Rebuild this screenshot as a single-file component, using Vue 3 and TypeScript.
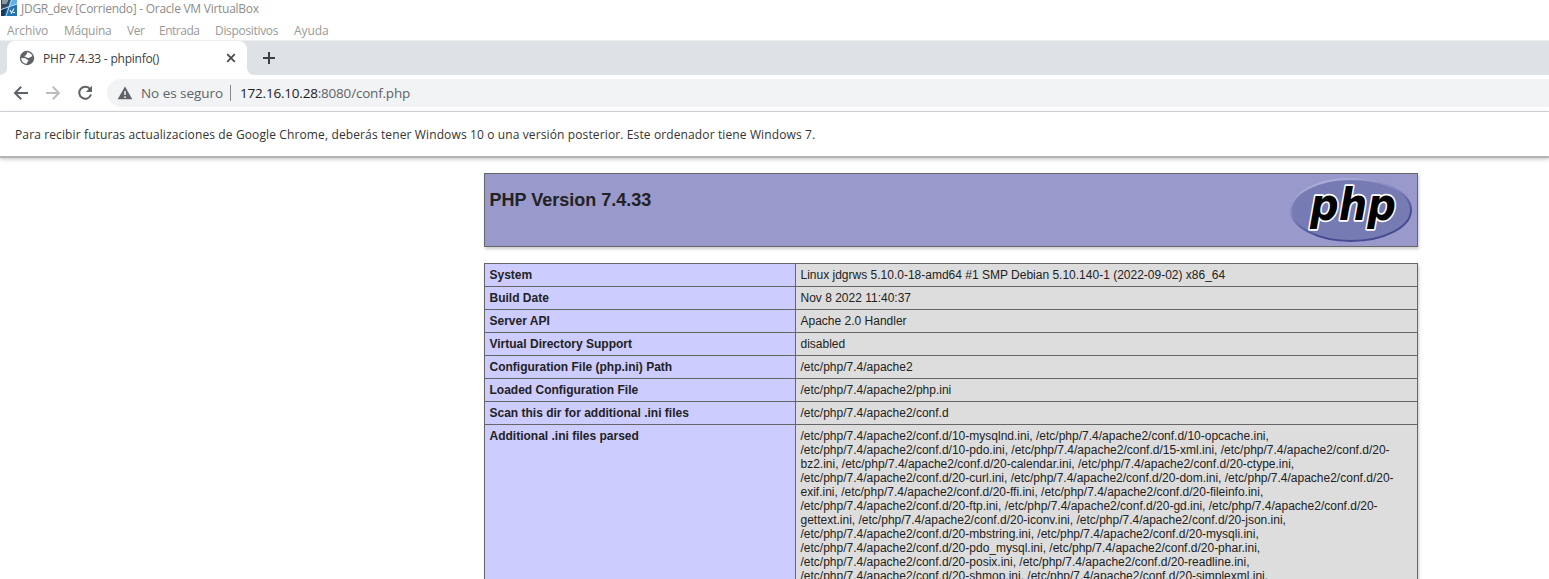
<script setup lang="ts">
interface Row {
  label: string
  value: string
}

const menus: string[] = ['Archivo', 'Máquina', 'Ver', 'Entrada', 'Dispositivos', 'Ayuda']

const rows: Row[] = [
  { label: 'System', value: 'Linux jdgrws 5.10.0-18-amd64 #1 SMP Debian 5.10.140-1 (2022-09-02) x86_64' },
  { label: 'Build Date', value: 'Nov 8 2022 11:40:37' },
  { label: 'Server API', value: 'Apache 2.0 Handler' },
  { label: 'Virtual Directory Support', value: 'disabled' },
  { label: 'Configuration File (php.ini) Path', value: '/etc/php/7.4/apache2' },
  { label: 'Loaded Configuration File', value: '/etc/php/7.4/apache2/php.ini' },
  { label: 'Scan this dir for additional .ini files', value: '/etc/php/7.4/apache2/conf.d' },
]

const dir = '/etc/php/7.4/apache2/conf.d/'
const parsedLines: string[] = [
  `${dir}10-mysqlnd.ini, ${dir}10-opcache.ini,`,
  `${dir}10-pdo.ini, ${dir}15-xml.ini, ${dir}20-`,
  `bz2.ini, ${dir}20-calendar.ini, ${dir}20-ctype.ini,`,
  `${dir}20-curl.ini, ${dir}20-dom.ini, ${dir}20-`,
  `exif.ini, ${dir}20-ffi.ini, ${dir}20-fileinfo.ini,`,
  `${dir}20-ftp.ini, ${dir}20-gd.ini, ${dir}20-`,
  `gettext.ini, ${dir}20-iconv.ini, ${dir}20-json.ini,`,
  `${dir}20-mbstring.ini, ${dir}20-mysqli.ini,`,
  `${dir}20-pdo_mysql.ini, ${dir}20-phar.ini,`,
  `${dir}20-posix.ini, ${dir}20-readline.ini,`,
  `${dir}20-shmop.ini, ${dir}20-simplexml.ini,`,
]
</script>

<template>
  <div class="window">
    <header class="titlebar">
      <svg class="vm-icon" width="16" height="16" viewBox="0 0 16 16">
        <rect width="16" height="16" fill="#1d5f9c" />
        <path d="M0 0h9L6 7 0 9z" fill="#34495a" />
        <path d="M10 0h6v5l-8 2z" fill="#62aee6" />
        <path d="M0 9l6-2-3 9H0z" fill="#163a5c" />
        <path d="M7 8l9-3v11H5z" fill="#2673b4" />
        <path d="M1 1h6M1 3h5" stroke="#dce9f2" stroke-width="1.1" />
        <path d="M10.5 0L5 16M0 9.5L16 4" stroke="#b8dcf5" stroke-width="1" />
        <path d="M9 10l1.6 3L13 8.5M12 12.5h2" fill="none" stroke="#e6f3fc" stroke-width="1.1" />
      </svg>
      <span class="vm-title">JDGR_dev [Corriendo] - Oracle VM VirtualBox</span>
    </header>

    <nav class="menubar">
      <span v-for="(menu, i) in menus" :key="menu" class="menu" :class="`menu-${i}`">{{ menu }}</span>
    </nav>

    <div class="tabstrip">
      <div class="tab">
        <svg class="globe" width="16" height="16" viewBox="0 0 16 16">
          <circle cx="8" cy="8" r="7.2" fill="#5f6368" />
          <path d="M8.2 2.2c2.5.2 4.4 1.6 5.2 3.8-.8.9-1.8.5-2.3 1.3-.7 1.1-2.2.8-3.3.2-.8-.5-1.9-.1-2.2-.9-.3-1 1.4-.9 1.7-1.8.3-.8.9-1.2.9-2.6z" fill="#fff" />
          <path d="M2.2 8.1l4 .1c1.4 0 1.1 1.5 2.3 1.6 1.2.2 1.2 1.2.3 1.8-.8.6-.4 1.5-1.2 2.2-3-.1-5.3-2.5-5.4-5.7z" fill="#fff" />
        </svg>
        <span class="tab-title">PHP 7.4.33 - phpinfo()</span>
        <svg class="close" width="10" height="10" viewBox="0 0 10 10">
          <path d="M1.2 1.2l7.6 7.6M8.8 1.2L1.2 8.8" stroke="#45494d" stroke-width="1.7" />
        </svg>
      </div>
      <div class="strip-rest">
        <svg class="plus" width="14" height="14" viewBox="0 0 14 14">
          <path d="M7 1v12M1 7h12" stroke="#3c4043" stroke-width="2" />
        </svg>
      </div>
    </div>

    <div class="toolbar">
      <svg class="nav-icon" width="16" height="16" viewBox="0 0 16 16">
        <path d="M15 8H2.5M8.2 1.8L2 8l6.2 6.2" fill="none" stroke="#5f6368" stroke-width="2" />
      </svg>
      <svg class="nav-icon" width="16" height="16" viewBox="0 0 16 16">
        <path d="M1 8h12.5M7.8 1.8L14 8l-6.2 6.2" fill="none" stroke="#babcbe" stroke-width="2" />
      </svg>
      <svg class="nav-icon" width="16" height="16" viewBox="0 0 16 16">
        <path d="M13.1 4.2A6 6 0 1 0 14 9.5" fill="none" stroke="#5f6368" stroke-width="2" />
        <path d="M15 .8V7H8.8z" fill="#5f6368" />
      </svg>
      <div class="omnibox">
        <svg class="warn" width="16" height="14" viewBox="0 0 16 14">
          <path d="M8 0.5L15.3 13.2H.7z" fill="#5f6368" />
          <path d="M8 5v4M8 10.2v1.7" stroke="#f1f3f4" stroke-width="1.5" />
        </svg>
        <span class="insecure">No es seguro</span>
        <span class="divider"></span>
        <span class="url"><span class="host">172.16.10.28</span><span class="path">:8080/conf.php</span></span>
      </div>
    </div>

    <div class="infobar">
      <span class="notice">Para recibir futuras actualizaciones de Google Chrome, deberás tener Windows 10 o una versión posterior. Este ordenador tiene Windows 7.</span>
    </div>

    <main class="page">
      <section class="banner">
        <h1>PHP Version 7.4.33</h1>
        <svg class="logo" width="122" height="66" viewBox="0 0 122 66">
          <defs>
            <linearGradient id="rim" x1="0.2" y1="0" x2="0.7" y2="1">
              <stop offset="0" stop-color="#b5b7de" />
              <stop offset="0.42" stop-color="#7c7fb9" />
              <stop offset="0.75" stop-color="#494b92" />
              <stop offset="1" stop-color="#484a91" />
            </linearGradient>
          </defs>
          <ellipse cx="61" cy="33" rx="60" ry="31" fill="#777bb3" stroke="url(#rim)" stroke-width="2" />
          <text class="logo-text" x="20" y="43" textLength="86" lengthAdjust="spacingAndGlyphs">php</text>
        </svg>
      </section>

      <table class="info">
        <tbody>
          <tr v-for="row in rows" :key="row.label">
            <th>{{ row.label }}</th>
            <td>{{ row.value }}</td>
          </tr>
          <tr>
            <th>Additional .ini files parsed</th>
            <td>
              <div v-for="line in parsedLines" :key="line" class="line">{{ line }}</div>
            </td>
          </tr>
        </tbody>
      </table>
    </main>
  </div>
</template>

<style>
html,
body {
  margin: 0;
  overflow: hidden;
  background: #fff;
}
</style>

<style scoped>
.window {
  width: 1549px;
  height: 579px;
  overflow: hidden;
  display: flex;
  flex-direction: column;
  background: #fff;
  font-family: 'Open Sans', 'Noto Sans', sans-serif;
  white-space: nowrap;
}
.window > * {
  flex-shrink: 0;
}
.titlebar {
  height: 20px;
  display: flex;
  align-items: flex-start;
  font-size: 12px;
  line-height: 18px;
  color: #8c8c8c;
}
.vm-icon {
  margin-left: 1px;
  margin-right: 4px;
}
.vm-title {
  letter-spacing: -0.26px;
}
.menubar {
  height: 20px;
  padding-left: 7px;
  display: flex;
  font-size: 12px;
  line-height: 21px;
  color: #999;
}
.menu {
  letter-spacing: -0.1px;
}
.menu-0 {
  width: 57px;
}
.menu-1 {
  width: 63px;
  letter-spacing: -0.25px;
}
.menu-2 {
  width: 32px;
  letter-spacing: -0.5px;
}
.menu-3 {
  width: 56px;
  letter-spacing: -0.5px;
}
.menu-4 {
  width: 79px;
  letter-spacing: -0.32px;
}
.tabstrip {
  height: 34px;
  background: #fff;
  display: flex;
  border-top: 1px solid #eceef0;
}
.tabstrip::before {
  content: '';
  width: 7px;
  background: #dee1e6;
  border-radius: 0 0 7px 0;
}
.tab {
  box-sizing: border-box;
  width: 240px;
  height: 34px;
  border-radius: 8px 8px 0 0;
  background: #fff;
  box-shadow: 0 -9px 0 #dee1e6;
  clip-path: inset(0);
  display: flex;
  align-items: center;
  padding: 0 11px 0 12px;
}
.tabstrip {
  background: linear-gradient(#dee1e6 20px, #fff 20px);
}
.strip-rest {
  flex: 1;
  background: #dee1e6;
  border-radius: 0 0 0 7px;
}
.tab-title {
  margin-left: 8px;
  flex: 1;
  font-size: 12px;
  letter-spacing: -0.22px;
  color: #3c4043;
}
.plus {
  display: block;
  margin: 10px 0 0 15px;
}
.toolbar {
  height: 36px;
  display: flex;
  align-items: center;
  padding-left: 13px;
  border-bottom: 1px solid #dadce0;
}
.nav-icon {
  margin-right: 16px;
}
.nav-icon:nth-child(3) {
  margin-right: 14px;
}
.omnibox {
  flex: 1;
  height: 28px;
  border-radius: 14px 0 0 14px;
  background: #f1f3f4;
  display: flex;
  align-items: center;
  padding-left: 10px;
  font-size: 13.5px;
  color: #5f6368;
}
.insecure {
  width: 81px;
  margin-left: 8px;
  letter-spacing: -0.05px;
}
.divider {
  width: 1px;
  height: 16px;
  margin: 0 9px 0 8px;
  background: #85888c;
}
.url {
  letter-spacing: -0.2px;
}
.host {
  color: #202124;
}
.infobar {
  box-sizing: border-box;
  height: 46px;
  padding-left: 15px;
  display: flex;
  align-items: center;
  border-bottom: 2px solid #b5b5b5;
  box-shadow: 0 1px 4px rgba(0, 0, 0, 0.25);
  font-size: 12px;
  letter-spacing: 0.122px;
  color: #333;
}
.page {
  width: 934px;
  margin: 15px 0 0 484px;
  font-family: 'Liberation Sans', Arial, sans-serif;
  color: #222;
}
.banner {
  box-sizing: border-box;
  height: 74px;
  border: 1px solid #666;
  background: #9999cc;
  box-shadow: 1px 2px 3px #ccc;
  display: flex;
  justify-content: space-between;
  padding: 3px 5px 0 4.5px;
}
h1 {
  margin: 13px 0 0;
  font-size: 18px;
  line-height: 20px;
  font-weight: 700;
}
.logo-text {
  font: italic 700 44px 'DejaVu Sans', sans-serif;
  fill: #000;
  stroke: #fff;
  stroke-width: 3.4px;
  stroke-linejoin: round;
  paint-order: stroke;
}
.info {
  width: 934px;
  margin-top: 16px;
  table-layout: fixed;
  border-collapse: collapse;
  box-shadow: 1px 2px 3px #ccc;
  font-size: 12px;
  line-height: 14px;
}
.info th,
.info td {
  border: 1px solid #666;
  padding: 4px 5px 4px 4.5px;
  vertical-align: baseline;
  text-align: left;
}
.info th {
  width: 300.5px;
  background: #ccccff;
}
.info td {
  background: #ddd;
}
</style>
